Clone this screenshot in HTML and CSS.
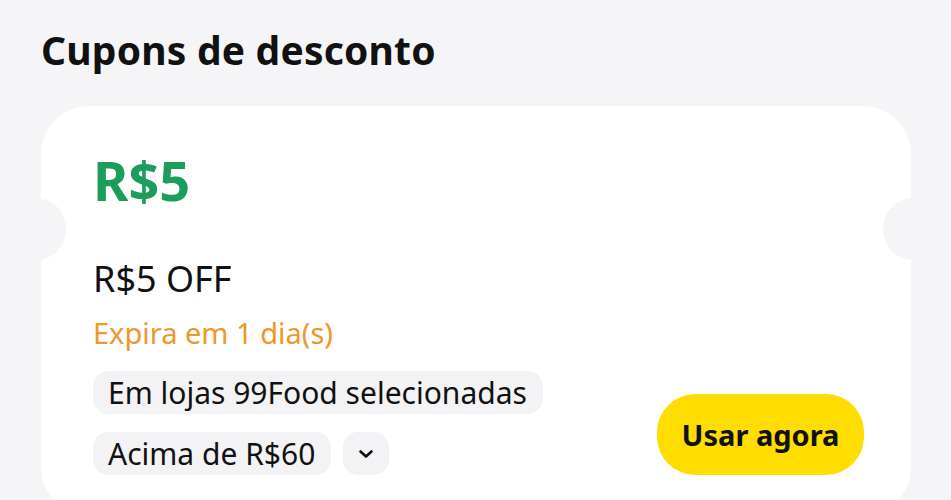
FILE: index.html
```html
<!DOCTYPE html>
<html lang="pt-BR">
<head>
<meta charset="utf-8">
<title>Cupons de desconto</title>
<link rel="stylesheet" href="styles.css">
</head>
<body>
<main class="page">
  <h1 class="title">Cupons de desconto</h1>
  <section class="coupon">
    <div class="amount">R$5</div>
    <div class="name">R$5 OFF</div>
    <div class="expiry">Expira em 1 dia(s)</div>
    <div class="bottom">
      <div class="tags">
        <div class="tag-row"><span class="tag">Em lojas 99Food selecionadas</span></div>
        <div class="tag-row">
          <span class="tag">Acima de R$60</span>
          <span class="tag more"><svg width="16" height="10" viewBox="0 0 16 10"><path d="M2.5 2.5l5.5 5 5.5-5" fill="none" stroke="#111" stroke-width="2.6" stroke-linecap="round" stroke-linejoin="round"/></svg></span>
        </div>
      </div>
      <button class="use">Usar agora</button>
    </div>
  </section>
</main>
</body>
</html>
```

FILE: styles.css
```css
* { box-sizing: border-box; }
html, body { margin: 0; padding: 0; }
body {
  background: #f5f5f7;
  font-family: "Noto Sans", "Open Sans", sans-serif;
  color: #111;
  overflow: hidden;
}
.page {
  padding: 31px 40px 0 41px;
}
.title {
  margin: 0;
  font-size: 39px;
  line-height: 38px;
  font-weight: 700;
  color: #111;
  letter-spacing: 0.2px;
}
.coupon {
  position: relative;
  margin-top: 37px;
  width: 870px;
  background: #fff;
  border-radius: 48px;
  padding: 48px 47px 40px 52px;
}
.coupon::before,
.coupon::after {
  content: "";
  position: absolute;
  top: 92px;
  width: 60px;
  height: 62px;
  border-radius: 50%;
  background: #f5f5f7;
}
.coupon::before { left: -35px; }
.coupon::after { right: -32px; }
.amount {
  font-size: 54px;
  line-height: 52px;
  font-weight: 700;
  color: #1c9d5b;
}
.name {
  margin-top: 56px;
  font-size: 36px;
  line-height: 34px;
}
.expiry {
  margin-top: 22px;
  font-size: 29px;
  line-height: 30px;
  color: #f0962a;
}
.bottom {
  margin-top: 23px;
  display: flex;
  justify-content: space-between;
  align-items: flex-end;
}
.tags {
  display: flex;
  flex-direction: column;
  gap: 18px;
}
.tag-row {
  display: flex;
  gap: 12px;
}
.tag {
  display: inline-flex;
  align-items: center;
  height: 43px;
  padding: 0 16px 0 15px;
  border-radius: 15px;
  background: #f3f3f5;
  font-size: 30px;
  color: #111;
}
.tag.more {
  width: 46px;
  padding: 0;
  justify-content: center;
}
.use {
  width: 207px;
  height: 81px;
  border: 0;
  border-radius: 38px;
  background: #ffdd00;
  font-family: inherit;
  font-size: 29px;
  font-weight: 700;
  color: #111;
  padding: 0;
}
```
